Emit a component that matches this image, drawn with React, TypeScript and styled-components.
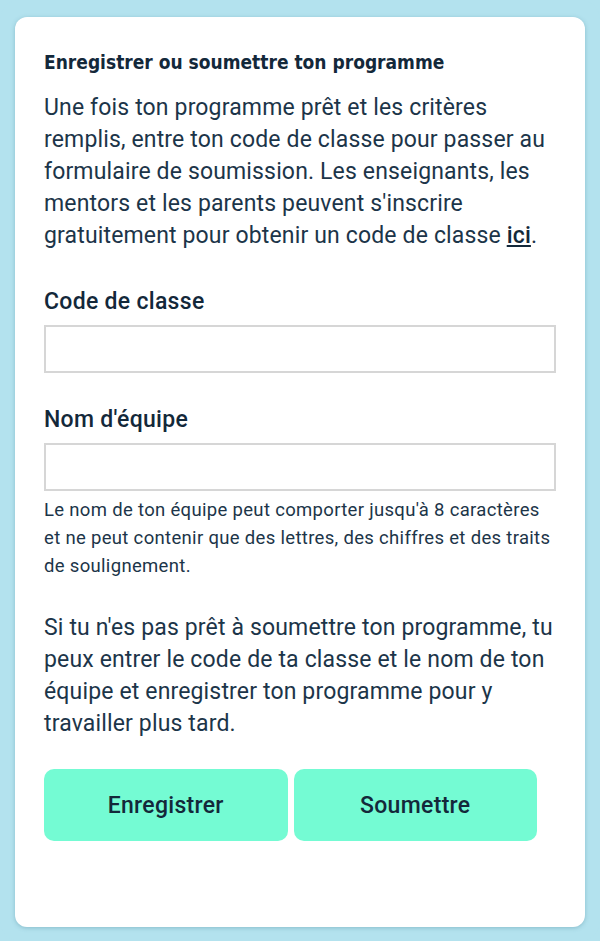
import React from 'react';
import { styled, createGlobalStyle } from 'styled-components';

const GlobalStyle = createGlobalStyle`
  html, body {
    margin: 0;
    padding: 0;
    background: #b3e2ee;
  }
  * {
    box-sizing: border-box;
  }
`;

function App() {
  return (
    <>
      <GlobalStyle />
      <Frame>
        <Card>
          <Title>Enregistrer ou soumettre ton programme</Title>
          <Paragraph $gap={18}>
            Une fois ton programme prêt et les critères remplis, entre ton code
            de classe pour passer au formulaire de soumission. Les enseignants,
            les mentors et les parents peuvent s'inscrire gratuitement pour
            obtenir un code de classe <Link href="#">ici</Link>.
          </Paragraph>
          <Field $gap={35}>
            <Label htmlFor="code">Code de classe</Label>
            <Input id="code" type="text" />
          </Field>
          <Field $gap={32}>
            <Label htmlFor="team">Nom d'équipe</Label>
            <Input id="team" type="text" />
            <Hint>
              Le nom de ton équipe peut comporter jusqu'à 8 caractères et ne
              peut contenir que des lettres, des chiffres et des traits de
              soulignement.
            </Hint>
          </Field>
          <Paragraph $gap={32}>
            Si tu n'es pas prêt à soumettre ton programme, tu peux entrer le
            code de ta classe et le nom de ton équipe et enregistrer ton
            programme pour y travailler plus tard.
          </Paragraph>
          <Actions>
            <ActionButton type="button">Enregistrer</ActionButton>
            <ActionButton type="button">Soumettre</ActionButton>
          </Actions>
        </Card>
      </Frame>
    </>
  );
}

const Frame = styled.div`
  width: 600px;
  height: 941px;
  padding: 17px 15px 14px 15px;
  background-color: #b3e2ee;
  border-radius: 20px;
`;
const Card = styled.div`
  height: 100%;
  background-color: #ffffff;
  border-radius: 12px;
  box-shadow: 0 1px 4px rgba(60, 120, 140, 0.35);
  padding: 33px 29px;
  display: flex;
  flex-direction: column;
  font-family: Roboto, 'Liberation Sans', sans-serif;
  color: #1c3549;
`;
const Title = styled.h2`
  margin: 0;
  font-family: 'DejaVu Sans Condensed', 'DejaVu Sans', sans-serif;
  font-size: 19px;
  font-weight: 700;
  line-height: 24px;
  color: #13283a;
`;
const Paragraph = styled.p<{ $gap: number }>`
  margin: ${(p) => p.$gap}px 0 0 0;
  font-size: 23px;
  line-height: 32px;
  letter-spacing: 0.15px;
`;
const Link = styled.a`
  color: #13283a;
  font-weight: 500;
  text-decoration: underline;
`;
const Field = styled.div<{ $gap: number }>`
  display: flex;
  flex-direction: column;
  margin-top: ${(p) => p.$gap}px;
`;
const Label = styled.label`
  font-size: 23px;
  font-weight: 500;
  line-height: 30px;
  letter-spacing: 0.3px;
  color: #13283a;
  margin-bottom: 8px;
`;
const Input = styled.input`
  width: 100%;
  height: 48px;
  border: 2px solid #d6d6d6;
  border-radius: 0;
  padding: 0 10px;
  font-size: 18px;
  font-family: inherit;
  outline: none;
`;
const Hint = styled.p`
  margin: 5px 0 0 0;
  font-size: 18.5px;
  line-height: 28px;
  letter-spacing: 0.32px;
`;
const Actions = styled.div`
  display: flex;
  gap: 6px;
  margin-top: 29px;
  padding-right: 19px;
`;
const ActionButton = styled.button`
  flex: 1;
  height: 72px;
  border: 0;
  border-radius: 10px;
  background-color: #74fbd3;
  font-family: Roboto, 'Liberation Sans', sans-serif;
  font-size: 23px;
  font-weight: 500;
  letter-spacing: 0.3px;
  color: #13283a;
  cursor: pointer;
`;

export default App;
